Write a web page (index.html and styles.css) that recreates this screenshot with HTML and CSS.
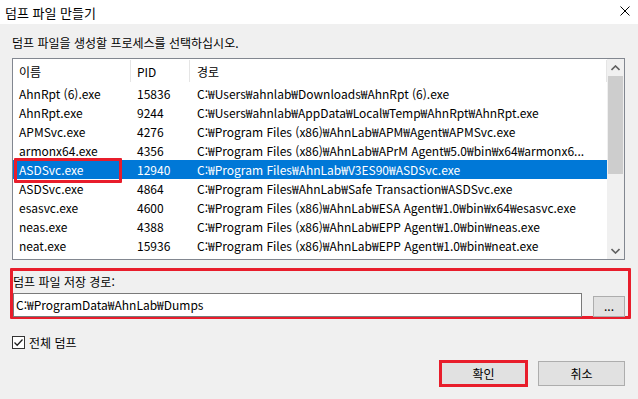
FILE: index.html
```html
<!DOCTYPE html>
<html lang="ko">
<head>
  <meta charset="UTF-8">
  <title>덤프 파일 만들기</title>
  <link rel="stylesheet" href="styles.css">
</head>
<body>
  <div class="titlebar">
    <span class="title">덤프 파일 만들기</span>
    <svg class="close" width="10" height="10" viewBox="0 0 10 10">
      <path d="M0.5 0.5 L9.5 9.5 M9.5 0.5 L0.5 9.5" stroke="#000" stroke-width="1" fill="none"/>
    </svg>
  </div>

  <div class="dialog">
    <div class="prompt">덤프 파일을 생성할 프로세스를 선택하십시오.</div>

    <div class="list">
      <div class="rows">
        <div class="row head">
          <div class="cell">이름</div>
          <div class="cell">PID</div>
          <div class="cell">경로</div>
        </div>
        <div class="row"><div class="cell">AhnRpt (6).exe</div><div class="cell">15836</div><div class="cell">C:₩Users₩ahnlab₩Downloads₩AhnRpt (6).exe</div></div>
        <div class="row"><div class="cell">AhnRpt.exe</div><div class="cell">9244</div><div class="cell">C:₩Users₩ahnlab₩AppData₩Local₩Temp₩AhnRpt₩AhnRpt.exe</div></div>
        <div class="row"><div class="cell">APMSvc.exe</div><div class="cell">4276</div><div class="cell">C:₩Program Files (x86)₩AhnLab₩APM₩Agent₩APMSvc.exe</div></div>
        <div class="row"><div class="cell">armonx64.exe</div><div class="cell">4356</div><div class="cell">C:₩Program Files (x86)₩AhnLab₩APrM Agent₩5.0₩bin₩x64₩armonx6...</div></div>
        <div class="row selected"><div class="cell">ASDSvc.exe<span class="mark"></span></div><div class="cell">12940</div><div class="cell">C:₩Program Files₩AhnLab₩V3ES90₩ASDSvc.exe</div></div>
        <div class="row"><div class="cell">ASDSvc.exe</div><div class="cell">4864</div><div class="cell">C:₩Program Files₩AhnLab₩Safe Transaction₩ASDSvc.exe</div></div>
        <div class="row"><div class="cell">esasvc.exe</div><div class="cell">4600</div><div class="cell">C:₩Program Files (x86)₩AhnLab₩ESA Agent₩1.0₩bin₩x64₩esasvc.exe</div></div>
        <div class="row"><div class="cell">neas.exe</div><div class="cell">4388</div><div class="cell">C:₩Program Files (x86)₩AhnLab₩EPP Agent₩1.0₩bin₩neas.exe</div></div>
        <div class="row"><div class="cell">neat.exe</div><div class="cell">15936</div><div class="cell">C:₩Program Files (x86)₩AhnLab₩EPP Agent₩1.0₩bin₩neat.exe</div></div>
      </div>
      <div class="scrollbar">
        <div class="arrow">
          <svg width="9" height="6" viewBox="0 0 9 6"><path d="M0.5 5 L4.5 1 L8.5 5" stroke="#606060" stroke-width="1.6" fill="none"/></svg>
        </div>
        <div class="track"><div class="thumb"></div></div>
        <div class="arrow">
          <svg width="9" height="6" viewBox="0 0 9 6"><path d="M0.5 1 L4.5 5 L8.5 1" stroke="#606060" stroke-width="1.6" fill="none"/></svg>
        </div>
      </div>
    </div>

    <div class="path-group">
      <div class="path-label">덤프 파일 저장 경로:</div>
      <div class="path-row">
        <div class="path-input">C:₩ProgramData₩AhnLab₩Dumps</div>
        <div class="browse">...</div>
      </div>
    </div>

    <div class="check-row">
      <span class="checkbox">
        <svg width="11" height="11" viewBox="0 0 11 11"><path d="M1.5 5.5 L4.2 8.2 L9.5 2.5" stroke="#222" stroke-width="1.3" fill="none"/></svg>
      </span>
      <span>전체 덤프</span>
    </div>

    <div class="buttons">
      <div class="btn ok">확인</div>
      <div class="btn">취소</div>
    </div>
  </div>
</body>
</html>
```

FILE: styles.css
```css
body {
  margin: 0;
  background: #f0f0f0;
  color: #000;
  font-family: "Noto Sans CJK KR", "Noto Sans", sans-serif;
  font-size: 12px;
  width: 638px;
  height: 399px;
  overflow: hidden;
}
.titlebar {
  height: 24px;
  background: #fff;
  display: flex;
  align-items: center;
  justify-content: space-between;
  padding: 0 8px 0 5px;
}
.title {
  font-size: 13px;
}
.close {
  margin-top: -2px;
}
.dialog {
  padding: 0 13px 0 12px;
}
.prompt {
  height: 34px;
  line-height: 38px;
}
.list {
  height: 200px;
  border: 1px solid #828790;
  background: #fff;
  display: flex;
}
.rows {
  flex: 1;
  overflow: hidden;
}
.row {
  display: grid;
  grid-template-columns: 118px 59px 1fr;
  height: 19px;
  line-height: 19px;
  white-space: nowrap;
}
.cell {
  padding-left: 6px;
  overflow: hidden;
  position: relative;
}
.row .cell:nth-child(3) {
  padding-left: 7px;
}
.head {
  height: 25px;
  line-height: 23px;
}
.head .cell {
  border-right: 1px solid #e5e5e5;
  margin: 1px 0 2px;
}
.row.selected {
  background: #0078d7;
  color: #fff;
}
.row.selected .cell {
  overflow: visible;
}
.mark {
  position: absolute;
  left: 1px;
  top: -2px;
  width: 102px;
  height: 19px;
  border: 3px solid #e81d2b;
  border-radius: 1px;
}
.scrollbar {
  width: 17px;
  background: #f0f0f0;
  display: flex;
  flex-direction: column;
}
.arrow {
  height: 17px;
  display: flex;
  align-items: center;
  justify-content: center;
}
.track {
  flex: 1;
}
.thumb {
  height: 98px;
  margin: 0 1px;
  background: #cdcdcd;
}
.path-group {
  margin: 8px -6px 0 -2px;
  border: 3px solid #e81d2b;
  border-radius: 1px;
  padding: 0 3px 0 0;
}
.path-label {
  height: 22px;
  line-height: 22px;
}
.path-row {
  display: flex;
  align-items: flex-end;
  gap: 11px;
  margin-bottom: -1px;
}
.path-input {
  flex: 1;
  height: 22px;
  line-height: 22px;
  background: #fff;
  border: 1px solid #7a7a7a;
  padding-left: 2px;
}
.browse {
  width: 30px;
  height: 19px;
  line-height: 17px;
  background: #e1e1e1;
  border: 1px solid #adadad;
  text-align: center;
}
.check-row {
  margin-top: 17px;
  display: flex;
  align-items: center;
  gap: 4px;
  height: 13px;
}
.checkbox {
  width: 11px;
  height: 11px;
  border: 1px solid #333;
  background: #fff;
  display: flex;
}
.buttons {
  margin-top: 12px;
  display: flex;
  justify-content: flex-end;
  gap: 11px;
}
.btn {
  width: 85px;
  height: 23px;
  line-height: 23px;
  background: #e1e1e1;
  border: 1px solid #adadad;
  text-align: center;
}
.btn.ok {
  border-color: #0078d7;
  outline: 3px solid #e81d2b;
  outline-offset: -2px;
}
```
